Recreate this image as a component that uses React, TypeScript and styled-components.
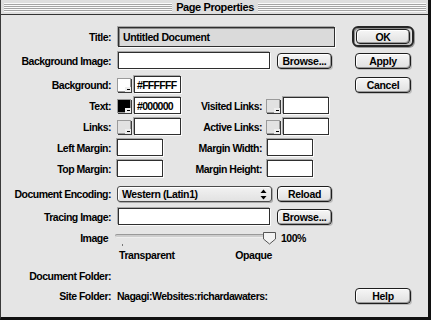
import React from 'react'
import styled, { createGlobalStyle } from 'styled-components'

const GlobalStyle = createGlobalStyle`
  html, body {
    margin: 0;
    padding: 0;
    background: #e5e5e5;
  }
  body {
    font-family: "Liberation Sans", Arial, sans-serif;
    color: #000;
  }
`

const App = () => {
  return (
    <>
      <GlobalStyle />
      <Window>
        <TitleBar>
          <Stripes />
          <WindowTitle>Page Properties</WindowTitle>
          <Stripes />
        </TitleBar>
        <Body>
          <Row $top={11} $height={20}>
            <Label>Title:</Label>
            <Fields>
              <TextInput $width={217} $height={20} $dim>Untitled Document</TextInput>
            </Fields>
            <DefaultRing>
              <Button $width={54}>OK</Button>
            </DefaultRing>
          </Row>

          <Row $top={6} $height={17}>
            <Label>Background Image:</Label>
            <Fields $gap={7}>
              <TextInput $width={152} />
              <Button $width={55}>Browse...</Button>
            </Fields>
            <Button $width={56}>Apply</Button>
          </Row>

          <Row $top={7} $height={17}>
            <Label>Background:</Label>
            <Fields>
              <ColorGroup>
                <Swatch $color="#ffffff" />
                <TextInput $width={47} $hex>#FFFFFF</TextInput>
              </ColorGroup>
            </Fields>
            <Button $width={56}>Cancel</Button>
          </Row>

          <Row $top={4} $height={17}>
            <Label>Text:</Label>
            <Fields>
              <ColorGroup>
                <Swatch $color="#000000" />
                <TextInput $width={47} $hex>#000000</TextInput>
              </ColorGroup>
              <SubLabel>Visited Links:</SubLabel>
              <ColorGroup>
                <Swatch $color="#e2e2e2" />
                <TextInput $width={46} />
              </ColorGroup>
            </Fields>
          </Row>

          <Row $top={4} $height={17}>
            <Label>Links:</Label>
            <Fields>
              <ColorGroup>
                <Swatch $color="#e2e2e2" />
                <TextInput $width={47} />
              </ColorGroup>
              <SubLabel>Active Links:</SubLabel>
              <ColorGroup>
                <Swatch $color="#e2e2e2" />
                <TextInput $width={46} />
              </ColorGroup>
            </Fields>
          </Row>

          <Row $top={4} $height={17}>
            <Label>Left Margin:</Label>
            <Fields>
              <ColorGroup>
                <TextInput $width={46} />
              </ColorGroup>
              <SubLabel>Margin Width:</SubLabel>
              <TextInput $width={46} />
            </Fields>
          </Row>

          <Row $top={4} $height={17}>
            <Label>Top Margin:</Label>
            <Fields>
              <ColorGroup>
                <TextInput $width={46} />
              </ColorGroup>
              <SubLabel>Margin Height:</SubLabel>
              <TextInput $width={46} />
            </Fields>
          </Row>

          <Row $top={9} $height={16}>
            <Label>Document Encoding:</Label>
            <Fields $gap={5}>
              <Popup>
                <span>Western (Latin1)</span>
                <svg width="7" height="11" viewBox="0 0 7 11">
                  <path d="M3.5 0.5 L6.5 4 L0.5 4 Z" fill="#000" />
                  <path d="M3.5 10.5 L6.5 7 L0.5 7 Z" fill="#000" />
                </svg>
              </Popup>
              <Button $width={55}>Reload</Button>
            </Fields>
          </Row>

          <Row $top={6} $height={17}>
            <Label>Tracing Image:</Label>
            <Fields $gap={7}>
              <TextInput $width={152} />
              <Button $width={55}>Browse...</Button>
            </Fields>
          </Row>

          <Row $top={5} $height={16}>
            <Label $pad={3}>Image</Label>
            <Fields $gap={4}>
              <Slider>
                <Track />
                <Tick />
                <Thumb width="15" height="14" viewBox="0 0 15 14">
                  <path d="M1.5 1.5 H13.5 V8 L7.5 13 L1.5 8 Z" fill="#f2f2f2" stroke="#555" strokeWidth="1" />
                </Thumb>
              </Slider>
              <Percent>100%</Percent>
            </Fields>
          </Row>

          <Row $top={3} $height={11}>
            <span />
            <Marks>
              <Mark>Transparent</Mark>
              <Mark>Opaque</Mark>
            </Marks>
          </Row>

          <Row $top={9} $height={14}>
            <Label>Document Folder:</Label>
            <Fields />
          </Row>

          <Row $top={5} $height={16}>
            <Label>Site Folder:</Label>
            <Fields>
              <Value>Nagagi:Websites:richardawaters:</Value>
            </Fields>
            <Button $width={56}>Help</Button>
          </Row>
        </Body>
      </Window>
    </>
  )
}

const Window = styled.div`
  width: 431px;
  height: 320px;
  box-sizing: border-box;
  border-left: 1px solid #3a3a3a;
  border-right: 3px solid #111;
  border-bottom: 3px solid #111;
  background: #e5e5e5;
  display: flex;
  flex-direction: column;
  overflow: hidden;
`

const TitleBar = styled.div`
  height: 15px;
  box-sizing: border-box;
  border-bottom: 1px solid #333;
  background: #dedede;
  display: flex;
  align-items: center;
  gap: 4px;
  padding: 0 2px 0 3px;
`

const Stripes = styled.div`
  flex: 1;
  height: 9px;
  background: repeating-linear-gradient(to bottom, #fafafa 0 1px, #a4a4a4 1px 2px);
`

const WindowTitle = styled.div`
  font-size: 11px;
  font-weight: bold;
  letter-spacing: -0.4px;
  line-height: 13px;
  white-space: nowrap;
`

const Body = styled.div`
  display: flex;
  flex-direction: column;
`

const Row = styled.div<{ $top: number; $height: number }>`
  display: grid;
  grid-template-columns: 110px 230px 56px;
  column-gap: 7px;
  align-items: center;
  margin-top: ${(p) => p.$top}px;
  height: ${(p) => p.$height}px;
`

const Label = styled.div<{ $pad?: number }>`
  text-align: right;
  padding-right: ${(p) => p.$pad ?? 0}px;
  font-size: 10.5px;
  font-weight: bold;
  letter-spacing: -0.5px;
  white-space: nowrap;
`

const Fields = styled.div<{ $gap?: number }>`
  display: flex;
  align-items: center;
  gap: ${(p) => p.$gap ?? 0}px;
  height: 100%;
`

const ColorGroup = styled.div`
  width: 64px;
  display: flex;
  align-items: center;
  gap: 3px;
  margin-left: -1px;
`

const SubLabel = styled.div`
  width: 86px;
  box-sizing: border-box;
  padding-right: 5px;
  text-align: right;
  font-size: 10.5px;
  font-weight: bold;
  letter-spacing: -0.5px;
  white-space: nowrap;
`

const TextInput = styled.div<{ $width: number; $height?: number; $dim?: boolean; $hex?: boolean }>`
  width: ${(p) => p.$width}px;
  height: ${(p) => p.$height ?? 17}px;
  box-sizing: border-box;
  border: 1px solid #2e2e2e;
  background: ${(p) => (p.$dim ? '#dadada' : '#ffffff')};
  box-shadow: ${(p) =>
    p.$dim
      ? 'inset 1px 1px 0 #8a8a8a, -1px -1px 0 #a8a8a8, 1px 1px 0 #fbfbfb'
      : '-1px -1px 0 #a8a8a8, 1px 1px 0 #fbfbfb'};
  display: flex;
  align-items: center;
  padding-left: ${(p) => (p.$hex ? 2 : 4)}px;
  font-size: 10.5px;
  font-weight: bold;
  letter-spacing: ${(p) => (p.$hex ? -0.7 : -0.4)}px;
  white-space: nowrap;
  overflow: hidden;
`

const Swatch = styled.div<{ $color: string }>`
  position: relative;
  width: 14px;
  height: 14px;
  box-sizing: border-box;
  border: 1px solid #9a9a9a;
  background: ${(p) => p.$color};
  box-shadow: 1px 1px 0 #3a3a3a;
  flex-shrink: 0;

  &::after {
    content: '';
    position: absolute;
    right: -1px;
    bottom: -1px;
    width: 6px;
    height: 5px;
    background: linear-gradient(#000, #000) 2px 2px / 3px 1px no-repeat, #eeeeee;
  }
`

const Button = styled.div<{ $width: number }>`
  width: ${(p) => p.$width}px;
  height: 16px;
  box-sizing: border-box;
  border: 1px solid #1e1e1e;
  border-radius: 4px;
  background: linear-gradient(#f6f6f6, #e0e0e0);
  box-shadow: inset 1px 1px 0 #ffffff, inset -1px -1px 0 #9a9a9a, 1px 1px 0 #bdbdbd;
  display: flex;
  align-items: center;
  justify-content: center;
  font-size: 10.5px;
  font-weight: bold;
  letter-spacing: -0.3px;
  white-space: nowrap;
`

const DefaultRing = styled.div`
  margin-left: -3px;
  width: 62px;
  height: 21px;
  box-sizing: border-box;
  border: 2px solid #262626;
  border-radius: 6px;
  padding: 1px 2px;
  background: #e3e3e3;
  box-shadow: inset 1px 1px 0 #8c8c8c, 1px 1px 0 #999;
  display: flex;
  align-items: center;
  justify-content: center;

  & > div {
    height: 15px;
  }
`

const Popup = styled.div`
  width: 155px;
  height: 16px;
  margin-left: -1px;
  box-sizing: border-box;
  border: 1px solid #4a4a4a;
  border-radius: 3px;
  background: linear-gradient(#f2f2f2, #e2e2e2);
  box-shadow: inset 1px 1px 0 #fff, 1px 1px 0 #aaa;
  display: flex;
  align-items: center;
  justify-content: space-between;
  padding: 0 4px 0 4px;
  font-size: 10.5px;
  font-weight: bold;
  letter-spacing: -0.4px;
  white-space: nowrap;
`

const Slider = styled.div`
  position: relative;
  width: 162px;
  height: 16px;
  margin-left: -3px;
`

const Track = styled.div`
  position: absolute;
  left: 0;
  right: 8px;
  top: 4px;
  height: 4px;
  border-radius: 2px;
  background: #cdcdcd;
  box-shadow: inset 0 1px 0 #999, inset 0 -1px 0 #eeeeee;
`

const Tick = styled.div`
  position: absolute;
  left: 7px;
  top: 14px;
  width: 1px;
  height: 2px;
  background: #777;
`

const Thumb = styled.svg`
  position: absolute;
  left: 147px;
  top: 1px;
`

const Percent = styled.div`
  font-size: 10.5px;
  font-weight: bold;
  letter-spacing: -0.5px;
`

const Marks = styled.div`
  width: 154px;
  display: flex;
  justify-content: space-between;
  padding-left: 1px;
  box-sizing: border-box;
`

const Mark = styled.div`
  font-size: 10.5px;
  font-weight: bold;
  letter-spacing: -0.4px;
`

const Value = styled.div`
  margin-left: -1px;
  font-size: 10.5px;
  font-weight: bold;
  letter-spacing: -0.5px;
  white-space: nowrap;
`

export default App
